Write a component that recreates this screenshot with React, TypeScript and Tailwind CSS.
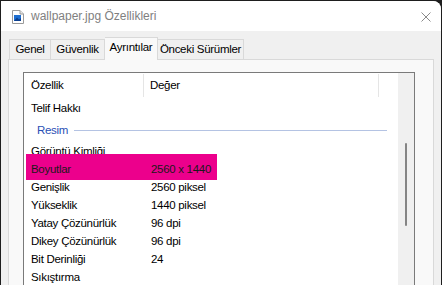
import React from "react";

const font = { fontFamily: "'Liberation Sans', Arial, sans-serif" };

function FileIcon() {
  return (
    <svg width="12" height="14" viewBox="0 0 12 14" className="block">
      <path d="M0.5 0.5 H8 L11.5 4 V13.5 H0.5 Z" fill="#ffffff" stroke="#9a9a9a" strokeWidth="1" />
      <path d="M8 0.5 V4 H11.5" fill="#e8e8e8" stroke="#9a9a9a" strokeWidth="1" />
      <rect x="2" y="5" width="7" height="6" fill="#1f6fd1" />
      <path d="M2 11 L5 7.5 L7 9.5 L9 8 V11 Z" fill="#0c3f8f" />
    </svg>
  );
}

type Row = { k: string; v?: string };

export default function App() {
  const rowsAfter: Row[] = [
    { k: "Genişlik", v: "2560 piksel" },
    { k: "Yükseklik", v: "1440 piksel" },
    { k: "Yatay Çözünürlük", v: "96 dpi" },
    { k: "Dikey Çözünürlük", v: "96 dpi" },
    { k: "Bit Derinliği", v: "24" },
    { k: "Sıkıştırma" },
  ];
  return (
    <div className="w-[442px] h-[285px] bg-[#1e1e1e] overflow-hidden" style={font}>
      <div className="ml-[1px] mt-[1px] w-[440px] h-[284px] rounded-tr-[8px] overflow-hidden bg-[#f0f0f0] flex flex-col">
        {/* title bar */}
        <div className="h-[30px] bg-white flex items-center shrink-0">
          <div className="ml-[11px] mt-[1px]">
            <FileIcon />
          </div>
          <div className="ml-[7px] text-[12px] text-[#7f7f7f]">wallpaper.jpg Özellikleri</div>
          <div className="ml-auto mr-[10px] mt-[1px]">
            <svg width="10" height="10" viewBox="0 0 10 10" className="block">
              <path d="M0.5 0.5 L9.5 9.5 M9.5 0.5 L0.5 9.5" stroke="#8a8a8a" strokeWidth="1" />
            </svg>
          </div>
        </div>
        {/* body */}
        <div className="flex-1 flex flex-col pl-[7px] pr-[7px] pt-[6px]">
          {/* tabs */}
          <div className="flex items-end h-[22px] pl-[1px] text-[11.5px] tracking-[-0.3px] text-black relative z-10">
            <div className="w-[42px] h-[20px] flex items-center justify-center border border-b-0 border-[#d9d9d9] bg-[#f0f0f0]">Genel</div>
            <div className="w-[54px] h-[20px] flex items-center justify-center border border-l-0 border-b-0 border-[#d9d9d9] bg-[#f0f0f0]">Güvenlik</div>
            <div className="w-[53px] h-[23px] -mb-[1px] flex items-center justify-center border border-l-0 border-b-0 border-[#d9d9d9] bg-[#f9f9f9] pb-[2px]">Ayrıntılar</div>
            <div className="w-[86px] h-[20px] flex items-center justify-center border border-l-0 border-b-0 border-[#d9d9d9] bg-[#f0f0f0]">Önceki Sürümler</div>
          </div>
          {/* panel */}
          <div className="flex-1 border border-[#d9d9d9] bg-[#f9f9f9] pl-[14px] pt-[12px] pr-[18px]">
            <div className="h-full border border-[#7a7a7a] border-b-0 bg-white flex text-[11.5px] tracking-[-0.3px] text-black">
              <div className="flex-1 flex flex-col">
                {/* header */}
                <div className="h-[24px] flex items-stretch">
                  <div className="w-[120px] pl-[7px] flex items-center border-r border-[#e5e5e5] mt-[1px]">Özellik</div>
                  <div className="w-[235px] pl-[6px] flex items-center border-r border-[#e5e5e5] mt-[1px]">Değer</div>
                </div>
                <div className="h-[3px]" />
                <div className="h-[18px] pl-[7px] flex items-center">Telif Hakkı</div>
                <div className="h-[25px] flex items-center pl-[13px]">
                  <span className="text-[#2a4fb5] w-[32px]">Resim</span>
                  <div className="ml-[5px] h-[1px] w-[313px] bg-[#b4c3e3]" />
                </div>
                <div className="h-[18px] pl-[7px] flex items-center">Görüntü Kimliği</div>
                <div className="h-[18px] flex items-center relative">
                  <div className="absolute left-[2px] top-[-7px] w-[191px] h-[26px] bg-[#ec008c]" />
                  <div className="relative w-[127px] pl-[7px] text-[#1a1a1a]">Boyutlar</div>
                  <div className="relative text-[#1a1a1a]">2560 x 1440</div>
                </div>
                {rowsAfter.map((r) => (
                  <div key={r.k} className="h-[18px] flex items-center">
                    <div className="w-[127px] pl-[7px]">{r.k}</div>
                    <div>{r.v}</div>
                  </div>
                ))}
              </div>
              {/* scrollbar */}
              <div className="w-[16px] bg-[#f0f0f0] flex justify-center">
                <div className="mt-[70px] w-[2px] h-[83px] rounded-full bg-[#858585]" />
              </div>
            </div>
          </div>
        </div>
      </div>
    </div>
  );
}
